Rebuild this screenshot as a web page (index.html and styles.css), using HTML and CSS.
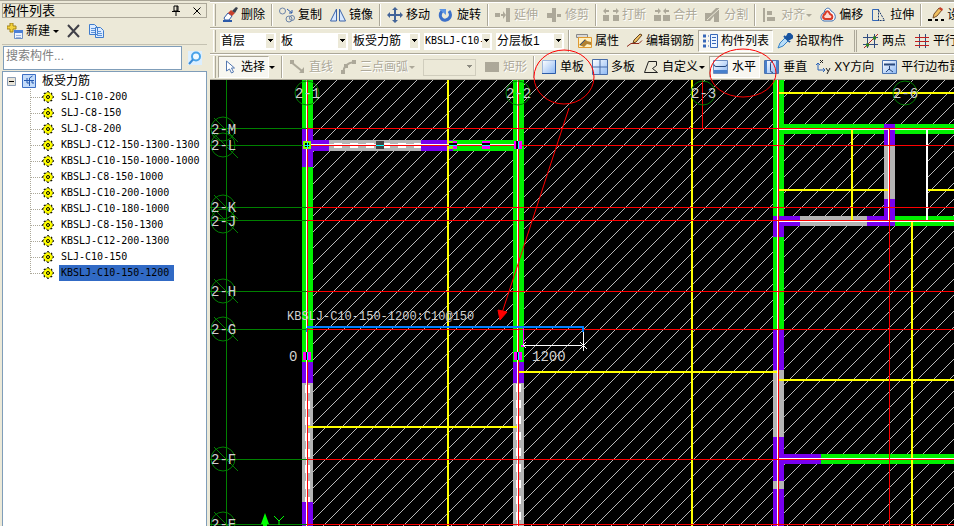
FILE: index.html
```html
<!DOCTYPE html>
<html lang="zh-CN">
<head>
    <meta charset="UTF-8">
    <meta name="viewport" content="width=device-width, initial-scale=1.0">
    <title>构件列表</title>
    <link rel="stylesheet" href="styles.css">
</head>
<body>

    <svg class="defs" width="0" height="0" aria-hidden="true">
        <symbol id="gear" viewBox="0 0 12 12">
            <path d="M6 0v12M0 6h12M2 2l8 8M10 2l-8 8" stroke="#000" stroke-width="1.500"/>
            <circle cx="6" cy="6" r="4.500" fill="#ff0" stroke="#000" stroke-dasharray="1.500 2"/>
            <path d="M6 1v10M1 6h10M3 3l6 6M9 3L3 9" stroke="#ff0"/>
            <circle cx="6" cy="6" r="1.500" fill="#ff0" stroke="#000"/>
        </symbol>
    </svg>

    <aside class="panel">
        <div class="panel-title">
            <h1>构件列表</h1>
            <button class="plain" aria-label="固定"><svg width="10" height="12" viewBox="0 0 10 12"><path d="M3 1h4v5H3zM6 1v5M1 6.500h8M5 7v4" fill="none" stroke="#000"/></svg></button>
            <button class="plain" aria-label="关闭"><svg width="8" height="8" viewBox="0 0 8 8"><path d="M.5.500l7 7M7.500.500l-7 7" stroke="#000"/></svg></button>
        </div>
        <div class="panel-tools">
            <button class="plain new"><svg width="16" height="16" viewBox="0 0 16 16"><path d="M3 0h3v3h3v3H6v3H3V6H0V3h3z" fill="#f4d33c" stroke="#a18218"/><path d="M7.500 7.500h8v8h-8z" fill="#eaf2ff" stroke="#6d8fc4"/><path d="M7 7h9v3H7z" fill="#4b80d8"/><path d="M9 12.500h5M9 14.500h5" stroke="#9bb5dd"/></svg>新建<i class="caret"></i></button>
            <button class="plain" aria-label="删除"><svg width="14" height="14" viewBox="0 0 14 14"><path d="M1 1l11 12M12 1L1 13" stroke="#404048" stroke-width="2"/></svg></button>
            <button class="plain" aria-label="复制"><svg width="16" height="14" viewBox="0 0 16 14"><path d="M.5.500h5l3 3v7h-8zM6.500 3.500h5l3 3v7h-8z" fill="#dcebff" stroke="#3f7ccc"/><path d="M2 4.500h4M2 6.500h4M2 8.500h4M8 7.500h4M8 9.500h5M8 11.500h5" stroke="#5b93da"/></svg></button>
        </div>
        <div class="search">
            <input type="text" id="search" placeholder="搜索构件..." aria-label="搜索构件">
            <button class="plain" aria-label="搜索"><svg width="14" height="14" viewBox="0 0 14 14"><path d="M0 0h14v14H0z" fill="#dcefff"/><circle cx="8" cy="5.500" r="4" fill="#f2faff" stroke="#4aa3e8" stroke-width="2"/><path d="M5 8.500L1 13" stroke="#3a8cd8" stroke-width="2"/></svg></button>
        </div>
        <div class="tree">
            <div class="root">
                <button class="plain" aria-label="折叠"><svg width="9" height="9" viewBox="0 0 9 9"><path d="M.5.500h8v8h-8z" fill="#e8e4d8" stroke="#8a9db5"/><path d="M2 4.500h5" stroke="#000"/></svg></button>
                <svg width="14" height="14" viewBox="0 0 14 14"><path d="M.5.500h13v13H.5z" fill="#c4dcfa" stroke="#3d6fc4"/><path d="M2 6.500h10M5 4v5h3M7.500 12V4l3-2M10 6v3h2" fill="none" stroke="#2459b0"/></svg>
                <span>板受力筋</span>
            </div>
            <ul>
                <li><svg class="gear"><use href="#gear"/></svg><span>SLJ-C10-200</span></li>
                <li><svg class="gear"><use href="#gear"/></svg><span>SLJ-C8-150</span></li>
                <li><svg class="gear"><use href="#gear"/></svg><span>SLJ-C8-200</span></li>
                <li><svg class="gear"><use href="#gear"/></svg><span>KBSLJ-C12-150-1300-1300</span></li>
                <li><svg class="gear"><use href="#gear"/></svg><span>KBSLJ-C10-150-1000-1000</span></li>
                <li><svg class="gear"><use href="#gear"/></svg><span>KBSLJ-C8-150-1000</span></li>
                <li><svg class="gear"><use href="#gear"/></svg><span>KBSLJ-C10-200-1000</span></li>
                <li><svg class="gear"><use href="#gear"/></svg><span>KBSLJ-C10-180-1000</span></li>
                <li><svg class="gear"><use href="#gear"/></svg><span>KBSLJ-C8-150-1300</span></li>
                <li><svg class="gear"><use href="#gear"/></svg><span>KBSLJ-C12-200-1300</span></li>
                <li><svg class="gear"><use href="#gear"/></svg><span>SLJ-C10-150</span></li>
                <li><svg class="gear"><use href="#gear"/></svg><span class="selected">KBSLJ-C10-150-1200</span></li>
            </ul>
        </div>
    </aside>

    <main class="work">
        <div class="toolbar">
            <i class="grip"></i>
            <button class="tool"><svg class="icon" viewBox="0 0 16 16"><path d="M1 14h9" stroke="#2c5aa8" stroke-width="2"/><path d="M2 11l4-5 4 3-3 4H3z" fill="#fff" stroke="#2c5aa8"/><path d="M6 6l3-3 4 3-3 3z" fill="#c8402c"/><path d="M10 4l4-4 2 1-3 5z" fill="#39414e"/></svg>删除</button>
            <i class="sep"></i>
            <button class="tool"><svg class="icon" viewBox="0 0 16 16"><g fill="none" stroke="#6c84a8"><circle cx="3.500" cy="4" r="3"/><circle cx="10" cy="12" r="3"/><circle cx="13" cy="11" r="2.500"/><path d="M8 2l5 4M13 3v3h-3" stroke="#2c5aa8"/></g></svg>复制</button>
            <button class="tool"><svg class="icon" viewBox="0 0 16 16"><path d="M6.500 2v12h-6zM9.500 2v12h6z" fill="#d8e8ff" stroke="#3c64a8"/></svg>镜像</button>
            <i class="sep"></i>
            <button class="tool"><svg class="icon" viewBox="0 0 16 16"><path d="M7 3v4H3V5L0 8l3 3V9h4v4H5l3 3 3-3H9V9h4v2l3-3-3-3v2H9V3h2L8 0 5 3z" fill="#426498"/></svg>移动</button>
            <button class="tool"><svg class="icon" viewBox="0 0 16 16"><path d="M4 4C0 9 4 14 8 13s6-5 3-9" fill="none" stroke="#3c70c8" stroke-width="3"/><path d="M1 2h7v6z" fill="#5c94e4"/></svg>旋转</button>
            <i class="sep"></i>
            <button class="tool" disabled><svg class="icon" viewBox="0 0 16 16"><path d="M0 6h5v4H0zM6 7h4v2H6zM11 1h4v14h-4z" fill="#aca899"/><path d="M8 4l3 4-3 4z" fill="#aca899"/></svg>延伸</button>
            <button class="tool" disabled><svg class="icon" viewBox="0 0 16 16"><path d="M6 1h4v14H6zM1 6h6v5H1zM11 7h4v3h-4z" fill="#aca899"/></svg>修剪</button>
            <i class="sep"></i>
            <button class="tool" disabled><svg class="icon" viewBox="0 0 16 16"><path d="M0 8h6v6H0zM10 8h6v6h-6zM0 4l3-3v2h3v2H3v2zM16 4l-3-3v2h-3v2h3v2z" fill="#aca899"/></svg>打断</button>
            <button class="tool" disabled><svg class="icon" viewBox="0 0 16 16"><path d="M0 8h7v6H0zM9 8h7v6H9zM7 4L4 1v2H1v2h3v2zM9 4l3-3v2h3v2h-3v2z" fill="#aca899"/></svg>合并</button>
            <button class="tool" disabled><svg class="icon" viewBox="0 0 16 16"><path d="M0 6h6l5-5h3v14H9V9l-4 5H0z" fill="#aca899"/><path d="M2 13L14 2" stroke="#ece9d8"/></svg>分割</button>
            <i class="sep"></i>
            <button class="tool" disabled><svg class="icon" viewBox="0 0 16 16"><path d="M1 1h2v14H1zM5 4h5v4H5zM5 10h8v4H5z" fill="#aca899"/></svg>对齐<i class="caret"></i></button>
            <button class="tool"><svg class="icon" viewBox="0 0 16 16"><path d="M5 3c2-3 5-2 6 1 5 2 6 9 1 10H4C-1 13 1 6 4 6z" fill="#fff" stroke="#386cb0"/><path d="M6 5c2-2 3 0 4 2 3 1 3 4 1 5H5c-3-1-2-4 0-5z" fill="#ffd8d0" stroke="#d83c28" stroke-width="2"/></svg>偏移</button>
            <button class="tool"><svg class="icon" viewBox="0 0 16 16"><path d="M8 2.500H1.500v11H8" fill="none" stroke="#3468b8"/><path d="M7.500 3l6 10.500h-6z" fill="none" stroke="#1c3c70" stroke-dasharray="2 1"/></svg>拉伸</button>
            <i class="sep"></i>
            <button class="tool"><svg class="icon" viewBox="0 0 16 16"><path d="M5 11l1-4 5-6 3 2-5 6z" fill="#f0c060" stroke="#785028"/><path d="M12 0l3 2-1 2-3-2z" fill="#c83c28"/><path d="M0 13h4M7 13h3M13 13h3" stroke="#000" stroke-width="2"/></svg>设置</button>
        </div>

        <div class="toolbar">
            <i class="grip"></i>
            <span class="combo combo-short"><select aria-label="楼层"><option>首层</option></select></span>
            <span class="combo"><select aria-label="构件类型"><option>板</option></select></span>
            <span class="combo"><select aria-label="构件"><option>板受力筋</option></select></span>
            <span class="combo"><select class="code" aria-label="名称"><option>KBSLJ-C10-150-1200</option></select></span>
            <span class="combo"><select aria-label="分层"><option>分层板1</option></select></span>
            <i class="sep wide"></i>
            <button class="tool"><svg class="icon" viewBox="0 0 16 16"><path d="M.5 1.500h11v3H.5z" fill="#d8d8d8" stroke="#888"/><path d="M2.500 4.500h13v10h-13z" fill="#fff0c0" stroke="#e09a30"/><path d="M3 12l6-6 2 2 4 1v3l-4-1-3 3z" fill="#b08030"/><path d="M4 12l5-5" stroke="#305080"/></svg>属性</button>
            <button class="tool"><svg class="icon" viewBox="0 0 16 16"><path d="M0 13.500l4-3h8l3-3" fill="none" stroke="#902818"/><path d="M6 10l1-3 6-6 2 1-6 7z" fill="#f0c060" stroke="#604020"/></svg>编辑钢筋</button>
            <button class="tool pressed"><svg class="icon" viewBox="0 0 16 16"><path d="M1 3h3M1 8h3M1 13h3" stroke="#3868b8" stroke-width="3"/><path d="M6 3h1M6 8h1M6 13h1" stroke="#3868b8"/><path d="M8.500 1.500h7v13h-7z" fill="#edf5ff" stroke="#3868b8"/><path d="M10 4.500h4M10 7.500h4M10 10.500h4" stroke="#3868b8"/></svg>构件列表</button>
            <button class="tool"><svg class="icon" viewBox="0 0 16 16"><path d="M1 15l2-5 5-5 3 3-5 5z" fill="#b8ddf8" stroke="#3884c8"/><path d="M7 3l6 6M9 5l3-5 4 4-5 3z" fill="#1854a0" stroke="#1854a0" stroke-width="2"/></svg>拾取构件</button>
            <i class="grip double"></i>
            <button class="tool"><svg class="icon" viewBox="0 0 16 16"><path d="M4.500 1v14M11.500 1v14M0 4.500h15M0 11.500h15" stroke="#304c80"/><path d="M1 15L15 1" stroke="#b02020"/><path d="M3 12h3M10 5h3" stroke="#308020" stroke-width="3"/></svg>两点</button>
            <button class="tool"><svg class="icon" viewBox="0 0 16 16"><path d="M5.500 1v14M11.500 1v14" stroke="#304c80"/><path d="M1 4.500h14M1 8.500h14M1 12.500h14" stroke="#c02020"/></svg>平行</button>
        </div>

        <div class="toolbar">
            <i class="grip"></i>
            <button class="tool pressed"><svg class="icon" viewBox="0 0 16 16"><path d="M4.500 2v10l3-2 2 4 2-1-2-4h3z" fill="#fff" stroke="#5478b0"/></svg>选择</button>
            <button class="plain" aria-label="选择方式"><i class="caret"></i></button>
            <i class="sep wide"></i>
            <button class="tool" disabled><svg class="icon" viewBox="0 0 16 16"><path d="M1 3l11 9" stroke="#aca899" stroke-width="2"/><path d="M0 1h4v4H0zM9 14h5V8z" fill="#aca899"/></svg>直线</button>
            <button class="tool" disabled><svg class="icon" viewBox="0 0 16 16"><path d="M2 14Q3 4 13 3" fill="none" stroke="#aca899" stroke-width="2"/><path d="M0 11h4v4H0zM3 5h4v4H3zM11 1h4v4h-4z" fill="#aca899"/></svg>三点画弧<i class="caret"></i></button>
            <span class="combo combo-off"><select aria-label="半径" disabled></select></span>
            <button class="tool" disabled><svg class="icon" viewBox="0 0 16 16"><path d="M1 3h14v10H1z" fill="#aca899"/></svg>矩形</button>
            <i class="sep"></i>
            <button class="tool"><svg class="icon" viewBox="0 0 16 16"><linearGradient id="sky" x2="1" y2="1"><stop stop-color="#fff"/><stop offset="1" stop-color="#8cb8f4"/></linearGradient><path d="M1.500 1.500h13v13h-13z" fill="url(#sky)" stroke="#a0b8dc"/><path d="M14.500 1v13.500H1" fill="none" stroke="#2c5ca8"/></svg>单板</button>
            <button class="tool"><svg class="icon" viewBox="0 0 16 16"><path d="M.5.500h15v15H.5z" fill="url(#sky)" stroke="#486ca8"/><path d="M8 0v16M0 8h16" stroke="#486ca8"/></svg>多板</button>
            <button class="tool"><svg class="icon" viewBox="0 0 16 16"><path d="M5.500 2.500h8v4l-4 3 5 4H1.500z" fill="none" stroke="#202020"/></svg>自定义<i class="caret"></i></button>
            <button class="tool pressed"><svg class="icon" viewBox="0 0 16 16"><path d="M.5 1.500h14v13H.5z" fill="url(#sky)" stroke="#6c8cc0"/><path d="M1 5.500q0 2 2 2h9q2 0 2-2" fill="none" stroke="#28487c"/><path d="M1 12.500h13" stroke="#4880cc" stroke-width="3"/></svg>水平</button>
            <button class="tool"><svg class="icon" viewBox="0 0 16 16"><path d="M.5 1.500h14v13H.5z" fill="url(#sky)" stroke="#4c74b0"/><path d="M9 2.500q-2.500 0-2.500 2v7q0 2 2.500 2" fill="none" stroke="#28487c"/><path d="M2 2v12M13 2v12" stroke="#4880cc" stroke-width="2"/></svg>垂直</button>
            <button class="tool"><svg class="icon" viewBox="0 0 16 16"><path d="M3 11V4M1 6l2-2 2 2M3 11h7M8 9l2 2-2 2" fill="none" stroke="#2c64b8"/><path d="M5 1l3 3M8 1L5 4M11 9l2 3M15 9l-3 6" stroke="#202020"/></svg>XY方向</button>
            <button class="tool"><svg class="icon" viewBox="0 0 16 16"><path d="M.5 1.500h14v13H.5z" fill="url(#sky)" stroke="#4c74b0"/><path d="M2 5.500h11" stroke="#28487c" stroke-width="2"/><path d="M7.500 7v4M4 13l3-3 4 3" fill="none" stroke="#28487c"/></svg>平行边布置</button>
        </div>

        <svg class="drawing" viewBox="210 80 744 446" preserveAspectRatio="xMinYMin slice" role="img" aria-label="结构平面图">
            <defs>
                <pattern id="hatch" width="16" height="16" patternUnits="userSpaceOnUse">
                    <path d="M-1 18L18 -1M-1 2L2 -1" stroke="#b8b8b8" shape-rendering="crispEdges"/>
                </pattern>
            </defs>
            <g shape-rendering="crispEdges">
                <path fill="url(#hatch)" d="M313 80h200v446H313zM524 80h249v446H524zM784 80h170v446H784z"/>
                <path fill="#000" d="M895 134h31v82h-31z"/>

                <!-- walls -->
                <path fill="#00f000" d="M302 80h11v282h-11zM453 140h60v11h-60zM513 80h11v282h-11zM773 80h11v249h-11zM784 124h170v10H784zM895 216h59v10h-59zM821 454h133v10H821z"/>
                <path fill="#b4b4b4" d="M302 383h11v119h-11zM329 140h92v11h-92zM513 383h11v143h-11zM773 370h11v67h-11zM773 481h11v8h-11zM884 146h11v53h-11zM800 216h67v10h-67z"/>
                <path fill="#7800f0" d="M302 128h11v39h-11zM313 140h16v11h-16zM421 140h32v11h-32zM302 362h11v21h-11zM302 502h11v24h-11zM513 362h11v21h-11zM773 216h27v10h-16v11h-11zM773 329h11v41h-11zM773 437h11v17h37v10h-37v17h-11zM773 489h11v37h-11zM884 124h11v22h-11zM884 199h11v27h-28v-10h17z"/>
                <path stroke="#fff" stroke-width="5" stroke-dasharray="8 8" fill="none" d="M334 145.500h87M307.500 385v117M518.500 384v142"/>

                <!-- slab edges -->
                <path stroke="#ff0" stroke-width="2" fill="none" d="M448 80v446M692 80v446M779 93h175M852 130v90M779 190h109M927 190h27M912 221v305M519 372h259M779 380h175M308 427h210"/>
                <path fill="#fff" d="M306 80h1v446h-1zM517 80h1v446h-1zM777 80h1v446h-1zM888 129h1v92h-1zM926 129h2v91h-2zM307 144h211v1H307zM778 129h176v1H778zM778 221h176v1H778zM779 458h175v1H779z"/>

                <!-- axis lines -->
                <path fill="#008000" d="M226 80h1v446h-1zM210 128h97v1h-97zM210 145h97v1h-97zM210 207h97v1h-97zM210 220h97v1h-97zM210 291h97v1h-97zM210 329h97v1h-97zM210 459h97v1h-97zM210 524h97v1h-97z"/>
                <path fill="#f00" d="M307 80h1v446h-1zM518 80h1v446h-1zM778 80h1v446h-1zM889 128h1v398h-1zM702 80h1v49h-1zM307 128h647v1H307zM307 145h647v1H307zM307 207h647v1H307zM307 220h647v1H307zM307 291h647v1H307zM307 329h647v1H307zM307 459h647v1H307zM307 524h647v1H307z"/>

                <!-- columns -->
                <path fill="#80ff00" d="M303 141h8v8h-8zM449 141h5v8h-5z"/>
                <path fill="#f0f" d="M453 141h4v8h-4zM482 141h8v8h-8zM514 141h8v8h-8zM303 352h8v8h-8zM514 352h8v8h-8z"/>
                <path fill="#404040" d="M376 141h8v8h-8z"/>
                <path fill="#000" d="M305 143h4v4h-4zM449 143h8v3h-8zM482 143h8v3h-8zM516 141h2v8h-2zM306 352h2v8h-2zM517 352h2v8h-2z"/>
                <path fill="#0ff" d="M304 145h6v1h-6zM307 142h1v7h-1zM376 145h8v1h-8zM449 145h8v1h-8zM482 145h8v1h-8zM518 141h1v8h-1zM307 352h1v8h-1zM518 352h1v8h-1z"/>

                <!-- rebar being placed -->
                <path fill="#f0f" d="M523 328h1v18h-1zM521 345h3v2h-3z"/>
                <path fill="#0080ff" d="M307 326h276v2H307zM582 326h2v6h-2zM306 328h1v4h-1z"/>
                <path fill="#fff" d="M583 332h1v13h-1zM524 345h58v1h-58z"/>
                <path stroke="#fff" fill="none" d="M523 345l3-3M523 345l3 3M580 342l7 7M587 342l-7 7M583 340v11"/>
            </g>

            <g class="bubbles">
                <circle cx="307" cy="93" r="12"/><circle cx="518" cy="93" r="12"/><circle cx="703" cy="93" r="12"/><circle cx="905" cy="93" r="12"/>
                <circle cx="223" cy="129" r="12"/><circle cx="223" cy="145" r="12"/><circle cx="223" cy="207" r="12"/><circle cx="223" cy="221" r="12"/>
                <circle cx="223" cy="291" r="12"/><circle cx="223" cy="329" r="12"/><circle cx="223" cy="459" r="12"/><circle cx="223" cy="524" r="12"/>
                <path d="M214 118l24 24M214 134l24 24M214 195l24 24M214 209l24 24M214 279l24 24M214 317l24 24M214 447l24 24M214 512l24 24"/>
            </g>
            <g class="labels">
                <text x="295" y="98">2-1</text><text x="506" y="98">2-2</text><text x="691" y="98">2-3</text><text x="893" y="98">2-6</text>
                <text x="211" y="134">2-M</text><text x="211" y="150">2-L</text><text x="211" y="212">2-K</text><text x="211" y="226">2-J</text>
                <text x="211" y="296">2-H</text><text x="211" y="334">2-G</text><text x="211" y="464">2-F</text><text x="211" y="529">2-E</text>
                <text x="289" y="361">0</text><text x="532" y="361">1200</text>
                <text class="rebar" x="287" y="320">KBSLJ-C10-150-1200:C10@150</text>
            </g>
            <path d="M265 513l4 11h-2v2h-4v-2h-2z" fill="#0f0"/>
            <path d="M274 516l5 5 5-5M279 521v4" fill="none" stroke="#0f0"/>
        </svg>

        <!-- red pen marks drawn over the toolbar and plan -->
        <svg class="marks" viewBox="210 0 744 526" preserveAspectRatio="xMinYMin slice" aria-hidden="true">
            <ellipse cx="564" cy="77" rx="30" ry="27"/>
            <ellipse cx="743" cy="73" rx="33" ry="24"/>
            <path d="M569 108L502 313"/>
            <path class="tip" d="M498 310l9 2-7 8z"/>
        </svg>
    </main>

</body>
</html>
```

FILE: styles.css
```css
* {
    box-sizing: border-box;
}

body {
    margin: 0;
    height: 100vh;
    display: flex;
    overflow: hidden;
    background-color: #ece9d8;
    color: #000;
    font: 12px/16px "Liberation Sans", "Noto Sans CJK SC", sans-serif;
}

button, input, select {
    font: inherit;
    color: inherit;
}

svg {
    flex: none;
    display: block;
}

.defs {
    position: absolute;
}

.plain {
    display: flex;
    align-items: center;
    padding: 0;
    border: 0;
    background: none;
}

.caret {
    border: 3px solid transparent;
    border-top-color: currentColor;
    border-bottom: 0;
}

/* component list */
.panel {
    flex: none;
    width: 210px;
    padding: 2px 3px 0 2px;
    display: flex;
    flex-direction: column;
    border-top: 1px solid #aca899;
}

.panel-title {
    display: flex;
    align-items: center;
    gap: 12px;
    height: 15px;
    padding-right: 5px;
    border: 1px solid #aca899;
}

.panel-title h1 {
    flex: 1;
    margin: 0;
    font-size: 13px;
    font-weight: normal;
}

.panel-tools {
    display: flex;
    align-items: center;
    gap: 8px;
    height: 27px;
    padding-left: 5px;
    border-bottom: 1px solid #c5c2b2;
}

.new {
    gap: 3px;
}

.search {
    display: flex;
    align-items: center;
    gap: 6px;
    height: 26px;
    padding: 1px 5px 1px 1px;
}

.search input {
    flex: 1;
    min-width: 0;
    height: 24px;
    padding: 0 2px 4px;
    border: 1px solid #7f9db9;
    background-color: #fff;
}

.search input::placeholder {
    color: #808080;
}

.tree {
    flex: 1;
    padding: 1px 0 0 4px;
    border: 1px solid #7f9db9;
    border-bottom: 0;
    background-color: #fff;
}

.root {
    display: flex;
    align-items: center;
    gap: 6px;
    height: 16px;
}

.tree ul {
    margin: 0 0 0 23px;
    padding: 0;
    list-style: none;
    background: repeating-linear-gradient(#aca899 0 1px, transparent 1px 2px) 0 0 / 1px calc(100% - 8px) no-repeat;
}

.tree li {
    display: flex;
    align-items: center;
    height: 16px;
    font: 10px/16px "DejaVu Sans Mono", monospace;
    white-space: nowrap;
}

.tree li::before {
    content: "";
    width: 12px;
    border-top: 1px dotted #aca899;
}

.tree li span {
    margin-left: 5px;
    padding: 0 2px;
}

.tree .selected {
    padding-right: 5px;
    background-color: #316ac5;
}

.gear {
    width: 12px;
    height: 12px;
}

/* toolbars */
.work {
    position: relative;
    flex: 1;
    min-width: 0;
    display: flex;
    flex-direction: column;
    border-top: 2px solid #aca899;
}

.toolbar {
    flex: none;
    display: flex;
    align-items: center;
    height: 26px;
    padding-left: 3px;
    overflow: hidden;
    border-top: 1px solid #fff;
    border-bottom: 1px solid #aca899;
}

.tool {
    flex: none;
    display: flex;
    align-items: center;
    gap: 3px;
    height: 22px;
    padding: 0 3px;
    border: 1px solid transparent;
    background: none;
    white-space: nowrap;
}

.tool .caret {
    margin-left: -2px;
}

.tool:disabled {
    color: #aca899;
    text-shadow: 1px 1px #fff;
}

.pressed {
    border-color: #aca899 #fff #fff #aca899;
    background-color: #f8f7f1;
}

.icon {
    width: 16px;
    height: 16px;
}

.grip {
    flex: none;
    width: 3px;
    height: 22px;
    margin-right: 2px;
    border-right: 1px solid #aca899;
    border-left: 1px solid #fff;
}

.double {
    margin: 0 2px 0 6px;
    border-left-color: #aca899;
}

.sep {
    flex: none;
    width: 2px;
    height: 22px;
    margin: 0 2px;
    border-left: 1px solid #aca899;
    border-right: 1px solid #fff;
}

.wide {
    margin: 0 2px 0 4px;
}

.plain + .wide {
    margin: 0 3px 0 6px;
}

.combo {
    flex: none;
    display: flex;
    align-items: center;
    width: 68px;
    height: 17px;
    margin-left: 4px;
    padding-right: 2px;
    background-color: #fff;
}

.combo-short {
    width: 56px;
    margin-left: 2px;
}

.combo select {
    flex: 1;
    min-width: 0;
    height: 17px;
    padding: 0 0 0 1px;
    border: 0;
    appearance: none;
    background: none;
}

.combo .code {
    font: 10px/16px "DejaVu Sans Mono", monospace;
}

.combo::after {
    content: "";
    width: 8px;
    height: 14px;
    background: linear-gradient(#000, #000) 50% 5px / 5px 1px no-repeat,
        linear-gradient(#000, #000) 50% 6px / 3px 1px no-repeat,
        linear-gradient(#000, #000) 50% 7px / 1px 1px no-repeat #ece9d8;
}

.combo-off {
    width: 53px;
    margin-right: 4px;
    border: 1px solid #d0cdbd;
    background-color: #ece9d8;
}

.combo-off::after {
    opacity: 0.4;
}

/* plan view */
.drawing {
    flex: 1;
    min-height: 0;
    width: 100%;
    background-color: #000;
}

.bubbles {
    fill: none;
    stroke: #008000;
}

.labels {
    fill: #d0d0d0;
    font: 14px "Liberation Mono", monospace;
}

.labels .rebar {
    font-size: 12px;
}

.marks {
    position: absolute;
    top: -2px;
    left: 0;
    width: 100%;
    height: calc(100% + 2px);
    fill: none;
    stroke: #f00;
    pointer-events: none;
}

.tip {
    fill: #f00;
}
```
